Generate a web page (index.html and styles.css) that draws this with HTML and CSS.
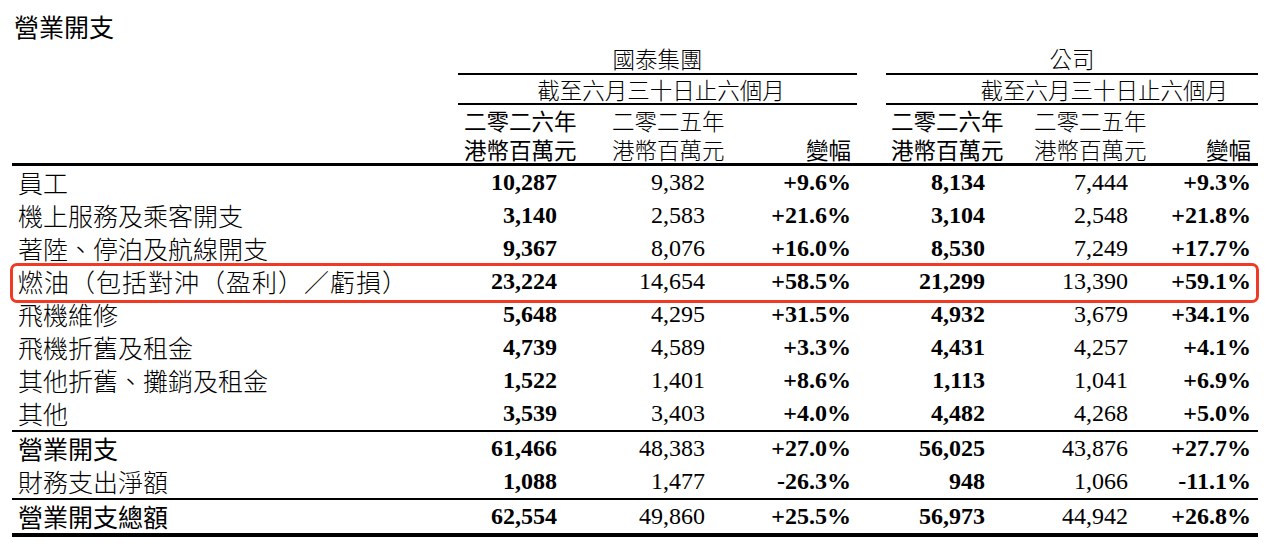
FILE: index.html
```html
<!DOCTYPE html>
<html lang="zh-Hant">
<head>
<meta charset="utf-8">
<title>營業開支</title>
<link rel="stylesheet" href="styles.css">
</head>
<body>
<h1 class="title">營業開支</h1>
<table class="opex">
  <colgroup>
    <col class="w-label"><col class="w-a1"><col class="w-a2"><col class="w-a3"><col class="w-gap"><col class="w-b1"><col class="w-b2"><col class="w-b3">
  </colgroup>
  <thead>
    <tr class="h1">
      <th></th>
      <th colspan="3" class="grp ruled">國泰集團</th>
      <th></th>
      <th colspan="3" class="grp ruled">公司</th>
    </tr>
    <tr class="h2">
      <th></th>
      <th colspan="3" class="period-a ruled">截至六月三十日止六個月</th>
      <th></th>
      <th colspan="3" class="period-b ruled">截至六月三十日止六個月</th>
    </tr>
    <tr class="h3">
      <th></th>
      <th class="a1 hd strong">二零二六年</th>
      <th class="a2 hd">二零二五年</th>
      <th class="a3"></th>
      <th></th>
      <th class="b1 hd strong">二零二六年</th>
      <th class="b2 hd">二零二五年</th>
      <th class="b3"></th>
    </tr>
    <tr class="h4">
      <th></th>
      <th class="a1 hd strong">港幣百萬元</th>
      <th class="a2 hd">港幣百萬元</th>
      <th class="a3 hdr strong">變幅</th>
      <th></th>
      <th class="b1 hd strong">港幣百萬元</th>
      <th class="b2 hd">港幣百萬元</th>
      <th class="b3 hdr strong">變幅</th>
    </tr>
  </thead>
  <tbody>
    <tr><td class="label">員工</td><td class="a1 n b">10,287</td><td class="a2 n">9,382</td><td class="a3 n b">+9.6%</td><td></td><td class="b1 n b">8,134</td><td class="b2 n">7,444</td><td class="b3 n b">+9.3%</td></tr>
    <tr><td class="label">機上服務及乘客開支</td><td class="a1 n b">3,140</td><td class="a2 n">2,583</td><td class="a3 n b">+21.6%</td><td></td><td class="b1 n b">3,104</td><td class="b2 n">2,548</td><td class="b3 n b">+21.8%</td></tr>
    <tr><td class="label">著陸、停泊及航線開支</td><td class="a1 n b">9,367</td><td class="a2 n">8,076</td><td class="a3 n b">+16.0%</td><td></td><td class="b1 n b">8,530</td><td class="b2 n">7,249</td><td class="b3 n b">+17.7%</td></tr>
    <tr class="marked"><td class="label mark wide">燃油（包括對沖（盈利）／虧損）</td><td class="a1 n b">23,224</td><td class="a2 n">14,654</td><td class="a3 n b">+58.5%</td><td></td><td class="b1 n b">21,299</td><td class="b2 n">13,390</td><td class="b3 n b">+59.1%</td></tr>
    <tr><td class="label">飛機維修</td><td class="a1 n b">5,648</td><td class="a2 n">4,295</td><td class="a3 n b">+31.5%</td><td></td><td class="b1 n b">4,932</td><td class="b2 n">3,679</td><td class="b3 n b">+34.1%</td></tr>
    <tr><td class="label">飛機折舊及租金</td><td class="a1 n b">4,739</td><td class="a2 n">4,589</td><td class="a3 n b">+3.3%</td><td></td><td class="b1 n b">4,431</td><td class="b2 n">4,257</td><td class="b3 n b">+4.1%</td></tr>
    <tr><td class="label">其他折舊、攤銷及租金</td><td class="a1 n b">1,522</td><td class="a2 n">1,401</td><td class="a3 n b">+8.6%</td><td></td><td class="b1 n b">1,113</td><td class="b2 n">1,041</td><td class="b3 n b">+6.9%</td></tr>
    <tr><td class="label">其他</td><td class="a1 n b">3,539</td><td class="a2 n">3,403</td><td class="a3 n b">+4.0%</td><td></td><td class="b1 n b">4,482</td><td class="b2 n">4,268</td><td class="b3 n b">+5.0%</td></tr>
    <tr class="subtotal"><td class="label strong">營業開支</td><td class="a1 n b">61,466</td><td class="a2 n">48,383</td><td class="a3 n b">+27.0%</td><td></td><td class="b1 n b">56,025</td><td class="b2 n">43,876</td><td class="b3 n b">+27.7%</td></tr>
    <tr><td class="label">財務支出淨額</td><td class="a1 n b">1,088</td><td class="a2 n">1,477</td><td class="a3 n b">-26.3%</td><td></td><td class="b1 n b">948</td><td class="b2 n">1,066</td><td class="b3 n b">-11.1%</td></tr>
    <tr class="total"><td class="label strong">營業開支總額</td><td class="a1 n b">62,554</td><td class="a2 n">49,860</td><td class="a3 n b">+25.5%</td><td></td><td class="b1 n b">56,973</td><td class="b2 n">44,942</td><td class="b3 n b">+26.8%</td></tr>
  </tbody>
</table>
</body>
</html>
```

FILE: styles.css
```css
html, body {
  margin: 0;
  padding: 0;
  background: #ffffff;
  color: #000000;
}

body {
  font-family: "Noto Sans CJK TC", "Noto Sans CJK SC", sans-serif;
}

.title {
  margin: 0;
  padding: 10px 0 0 14px;
  height: 34px;
  font-size: 25px;
  line-height: 32px;
  font-weight: 400;
}

.opex {
  margin-left: 12px;
  width: 1246px;
  table-layout: fixed;
  border-collapse: separate;
  border-spacing: 0;
}

.w-label { width: 446px; }
.w-a1 { width: 152px; }
.w-a2 { width: 150px; }
.w-a3 { width: 97px; }
.w-gap { width: 29px; }
.w-b1 { width: 144px; }
.w-b2 { width: 135px; }
.w-b3 { width: 93px; }

.opex th,
.opex td {
  padding: 0;
  white-space: nowrap;
  overflow: visible;
  vertical-align: middle;
}

.opex th {
  font-size: 22.5px;
  font-weight: 300;
  text-align: left;
}

.opex th.strong {
  font-weight: 400;
}

/* header rows */
.h1 th { height: 29px; line-height: 29px; }
.h2 th { height: 28px; line-height: 28px; }
.h3 th { height: 31px; line-height: 31px; }
.h4 th { height: 27px; line-height: 27px; border-bottom: 3px solid #000; }

.opex th.grp { text-align: center; }
.opex th.ruled { border-bottom: 2px solid #000; }
.opex th.period-a { text-align: center; padding-left: 7px; }
.opex th.period-b { text-align: right; padding-right: 30px; }

.opex th.a1.hd { padding-left: 6px; }
.opex th.a2.hd { padding-left: 2px; }
.opex th.b1.hd { padding-left: 5px; }
.opex th.b2.hd { padding-left: 4px; }
.opex th.a3.hdr { text-align: right; padding-right: 6px; }
.opex th.b3.hdr { text-align: right; padding-right: 7px; }

/* body rows */
.opex td {
  height: 33px;
  line-height: 33px;
}

.opex td.label {
  font-size: 25px;
  font-weight: 300;
  padding-left: 6px;
}

.opex td.label.strong { font-weight: 400; }
.opex td.label.wide { letter-spacing: 1px; }

.n {
  font-family: "Liberation Serif", "Times New Roman", serif;
  font-size: 24px;
  text-align: right;
}

.b { font-weight: 700; }

.opex td.a1 { padding-right: 53px; }
.opex td.a2 { padding-right: 55px; }
.opex td.a3 { padding-right: 6px; }
.opex td.b1 { padding-right: 45px; }
.opex td.b2 { padding-right: 37px; }
.opex td.b3 { padding-right: 7px; }

.subtotal td {
  border-top: 2px solid #000;
}

.total td {
  border-top: 2px solid #000;
  border-bottom: 4px solid #000;
}

/* highlight annotation drawn over the fuel row */
.mark {
  position: relative;
}

.mark::after {
  content: "";
  position: absolute;
  left: -2px;
  top: -2px;
  width: 1249px;
  height: 40px;
  box-sizing: border-box;
  border: 3px solid #f03a25;
  border-radius: 7px;
  pointer-events: none;
}
```
